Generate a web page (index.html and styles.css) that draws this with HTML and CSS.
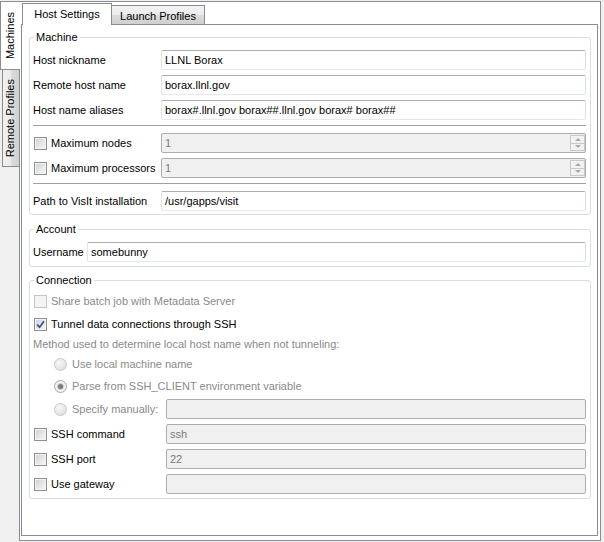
FILE: index.html
```html
<!DOCTYPE html>
<html>
<head>
<meta charset="utf-8">
<title>Host Settings</title>
<link rel="stylesheet" href="styles.css">
</head>
<body>
<div class="app">
  <div class="vtabs">
    <div class="vtab active"><span>Machines</span></div>
    <div class="vtab"><span>Remote Profiles</span></div>
  </div>
  <div class="frame">
    <div class="tabbar">
      <div class="tab active">Host Settings</div>
      <div class="tab">Launch Profiles</div>
    </div>
    <div class="pane">
      <fieldset class="group">
        <legend>Machine</legend>
        <div class="row"><span class="lbl">Host nickname</span><div class="edit">LLNL Borax</div></div>
        <div class="row gap"><span class="lbl">Remote host name</span><div class="edit">borax.llnl.gov</div></div>
        <div class="row gap"><span class="lbl">Host name aliases</span><div class="edit">borax#.llnl.gov borax##.llnl.gov borax# borax##</div></div>
        <div class="sep"></div>
        <div class="row">
          <span class="lbl"><span class="chk"></span>Maximum nodes</span>
          <div class="edit disabled spin"><span class="val">1</span><span class="btns"><span class="sb"><i class="up"></i></span><span class="sb"><i class="dn"></i></span></span></div>
        </div>
        <div class="row gap">
          <span class="lbl"><span class="chk"></span>Maximum processors</span>
          <div class="edit disabled spin"><span class="val">1</span><span class="btns"><span class="sb"><i class="up"></i></span><span class="sb"><i class="dn"></i></span></span></div>
        </div>
        <div class="sep"></div>
        <div class="row"><span class="lbl">Path to VisIt installation</span><div class="edit">/usr/gapps/visit</div></div>
      </fieldset>

      <fieldset class="group account">
        <legend>Account</legend>
        <div class="row user"><span class="lbl">Username</span><div class="edit">somebunny</div></div>
      </fieldset>

      <fieldset class="group connection">
        <legend>Connection</legend>
        <div class="crow"><span class="chk off"></span><span class="dim">Share batch job with Metadata Server</span></div>
        <div class="crow m3"><span class="chk on"><svg viewBox="0 0 11 11" width="11" height="11"><path d="M2.2 5.6 L4.6 8.2 L9 2.2" fill="none" stroke="#3d4f8f" stroke-width="1.7"/></svg></span><span>Tunnel data connections through SSH</span></div>
        <div class="crow"><span class="dim">Method used to determine local host name when not tunneling:</span></div>
        <div class="crow"><span class="radio"></span><span class="dim">Use local machine name</span></div>
        <div class="crow m2"><span class="radio sel"><b></b></span><span class="dim">Parse from SSH_CLIENT environment variable</span></div>
        <div class="crow grid m3"><span class="lbl"><span class="radio"></span><span class="dim">Specify manually:</span></span><div class="edit disabled"></div></div>
        <div class="crow grid m5"><span class="lbl"><span class="chk"></span>SSH command</span><div class="edit disabled">ssh</div></div>
        <div class="crow grid m5"><span class="lbl"><span class="chk"></span>SSH port</span><div class="edit disabled">22</div></div>
        <div class="crow grid m5"><span class="lbl"><span class="chk"></span>Use gateway</span><div class="edit disabled"></div></div>
      </fieldset>
    </div>
  </div>
</div>
</body>
</html>
```

FILE: styles.css
```css
html, body {
  margin: 0;
  padding: 0;
}
body {
  background: #f0f0f0;
  font: 11px "Liberation Sans", Arial, sans-serif;
  color: #000;
}
.app {
  display: flex;
  width: 604px;
  height: 542px;
  padding-top: 1px;
  box-sizing: border-box;
}

/* vertical tabs */
.vtabs {
  width: 20px;
  display: flex;
  flex-direction: column;
  z-index: 2;
}
.vtab {
  display: flex;
  align-items: center;
  justify-content: center;
  box-sizing: border-box;
}
.vtab span {
  writing-mode: vertical-rl;
  transform: rotate(180deg);
  line-height: 13px;
  white-space: nowrap;
}
.vtab.active {
  width: 20px;
  height: 69px;
  background: #fff;
  border: 1px solid #898c95;
  border-right: none;
}
.vtab:not(.active) {
  margin-left: 2px;
  width: 17px;
  height: 97px;
  border: 1px solid #898c95;
  border-right: none;
  border-top: none;
  background: linear-gradient(to right, #f2f2f2 0%, #ebebeb 50%, #dddddd 51%, #cfcfcf 100%);
}
.vtab:not(.active) span {
  padding-left: 1px;
}

/* outer frame */
.frame {
  margin-left: -1px;
  width: 582px;
  height: 540px;
  box-sizing: border-box;
  border: 1px solid #898c95;
  background: #fff;
  padding: 1px 2px 4px 1px;
  display: flex;
  flex-direction: column;
}

/* horizontal tabs */
.tabbar {
  height: 21px;
  flex: none;
  display: flex;
  align-items: flex-end;
  padding-left: 1px;
  z-index: 1;
}
.tab {
  box-sizing: border-box;
  text-align: center;
  border: 1px solid #898c95;
  border-bottom: none;
  white-space: nowrap;
}
.tab.active {
  width: 90px;
  height: 22px;
  margin-bottom: -1px;
  background: #fff;
  padding-top: 4px;
  line-height: 13px;
}
.tab:not(.active) {
  width: 93px;
  height: 19px;
  border-left: none;
  padding-top: 4px;
  line-height: 13px;
  background: linear-gradient(to bottom, #f2f2f2 0%, #ebebeb 50%, #dddddd 51%, #cfcfcf 100%);
}

.pane {
  flex: 1;
  border: 1px solid #898c95;
  background: #fff;
  display: flex;
  flex-direction: column;
  min-height: 0;
}

/* group boxes */
.group {
  border: 1px solid #d5dfe5;
  border-radius: 3px;
  margin: 6px 6px 0 7px;
  padding: 6px 4px 3px 3px;
  min-width: 0;
}
.group legend {
  padding: 0 2px;
  margin-left: 1px;
  line-height: 13px;
  height: 13px;
}
.group.account {
  margin-top: 8px;
  padding-bottom: 4px;
}
.group.connection {
  margin-top: 7px;
  padding-top: 4px;
  padding-bottom: 4px;
}

.row {
  display: grid;
  grid-template-columns: 128px 1fr;
  align-items: center;
  height: 20px;
}
.row.gap {
  margin-top: 5px;
}
.row.user {
  grid-template-columns: 54px 1fr;
}
.lbl {
  display: flex;
  align-items: center;
  white-space: nowrap;
}

.sep {
  height: 1px;
  background: #a0a0a0;
  margin: 5px 0 7px;
}

/* line edits */
.edit {
  height: 20px;
  box-sizing: border-box;
  border: 1px solid;
  border-color: #abadb3 #dbdfe6 #e3e9ef #e2e3ea;
  border-radius: 2px;
  padding: 0 3px;
  line-height: 18px;
  background: #fff;
  white-space: nowrap;
  overflow: hidden;
}
.edit.disabled {
  background: #f0f0f0;
  border-color: #adadad;
  color: #7a7a7a;
}
.spin {
  display: flex;
  align-items: center;
  padding-right: 0;
}
.spin .val {
  flex: 1;
}
.btns {
  display: flex;
  flex-direction: column;
  width: 15px;
  height: 16px;
  margin-right: 0;
}
.sb {
  flex: 1;
  box-sizing: border-box;
  border: 1px solid #c9c9c9;
  background: #f2f2f2;
  display: flex;
  align-items: center;
  justify-content: center;
}
.sb + .sb {
  border-top: none;
}
.sb i {
  width: 0;
  height: 0;
  border-left: 3px solid transparent;
  border-right: 3px solid transparent;
}
.sb i.up {
  border-bottom: 3px solid #a8a8a8;
}
.sb i.dn {
  border-top: 3px solid #a8a8a8;
}

/* checkboxes */
.chk {
  flex: none;
  width: 13px;
  height: 13px;
  box-sizing: border-box;
  border: 1px solid #8e8f8f;
  box-shadow: inset 0 0 0 1px #f4f4f4;
  background: linear-gradient(135deg, #cbcfd5 0%, #e7e9eb 60%, #f6f6f6 100%);
  margin: 0 4px 0 1px;
  display: flex;
  align-items: center;
  justify-content: center;
}
.chk.off {
  border-color: #c4c4c4;
  background: #f4f4f4;
  box-shadow: none;
}

/* radios */
.radio {
  flex: none;
  width: 13px;
  height: 13px;
  box-sizing: border-box;
  border-radius: 50%;
  border: 1px solid #c9c9c9;
  background: radial-gradient(circle at 35% 35%, #f7f7f7 0%, #e3e3e3 70%, #d8d8d8 100%);
  margin: 0 5px 0 21px;
  display: flex;
  align-items: center;
  justify-content: center;
}
.radio.sel {
  border-color: #a8a8a8;
  background: #f2f2f2;
}
.radio.sel b {
  width: 5px;
  height: 5px;
  border-radius: 50%;
  background: #7d7d7d;
  box-shadow: 0 0 0 1px #d0d0d0;
}

/* connection rows */
.crow {
  display: flex;
  align-items: center;
  height: 20px;
  white-space: nowrap;
}
.crow.grid {
  display: grid;
  grid-template-columns: 133px 1fr;
}
.crow.m2 { margin-top: 2px; }
.crow.m3 { margin-top: 3px; }
.crow.m5 { margin-top: 5px; }
.dim {
  color: #8a8a8a;
}
```
